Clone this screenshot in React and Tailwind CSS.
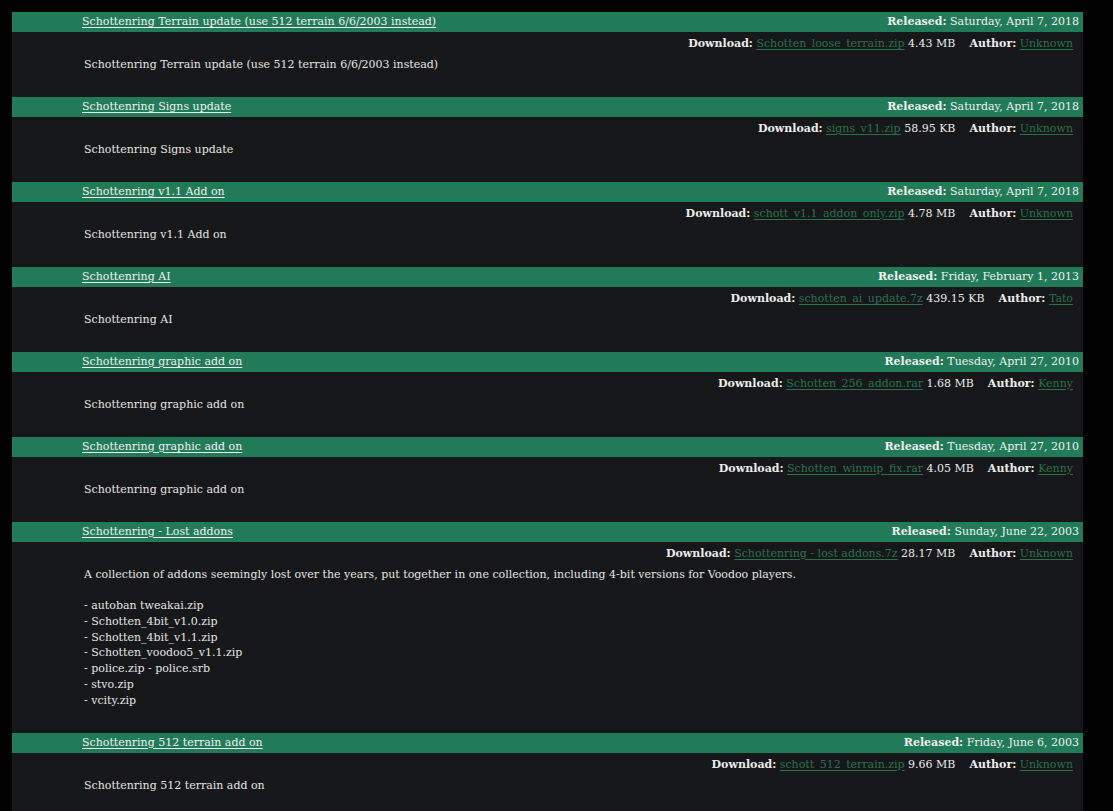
import React from "react";

const entries = [
  {
    title: "Schottenring Terrain update (use 512 terrain 6/6/2003 instead)",
    released: "Saturday, April 7, 2018",
    file: "Schotten_loose_terrain.zip",
    size: "4.43 MB",
    author: "Unknown",
    desc: ["Schottenring Terrain update (use 512 terrain 6/6/2003 instead)"],
  },
  {
    title: "Schottenring Signs update",
    released: "Saturday, April 7, 2018",
    file: "signs_v11.zip",
    size: "58.95 KB",
    author: "Unknown",
    desc: ["Schottenring Signs update"],
  },
  {
    title: "Schottenring v1.1 Add on",
    released: "Saturday, April 7, 2018",
    file: "schott_v1.1_addon_only.zip",
    size: "4.78 MB",
    author: "Unknown",
    desc: ["Schottenring v1.1 Add on"],
  },
  {
    title: "Schottenring AI",
    released: "Friday, February 1, 2013",
    file: "schotten_ai_update.7z",
    size: "439.15 KB",
    author: "Tato",
    desc: ["Schottenring AI"],
  },
  {
    title: "Schottenring graphic add on",
    released: "Tuesday, April 27, 2010",
    file: "Schotten_256_addon.rar",
    size: "1.68 MB",
    author: "Kenny",
    desc: ["Schottenring graphic add on"],
  },
  {
    title: "Schottenring graphic add on",
    released: "Tuesday, April 27, 2010",
    file: "Schotten_winmip_fix.rar",
    size: "4.05 MB",
    author: "Kenny",
    desc: ["Schottenring graphic add on"],
  },
  {
    title: "Schottenring - Lost addons",
    released: "Sunday, June 22, 2003",
    file: "Schottenring - lost addons.7z",
    size: "28.17 MB",
    author: "Unknown",
    desc: [
      "A collection of addons seemingly lost over the years, put together in one collection, including 4-bit versions for Voodoo players.",
      "\u00a0",
      "- autoban tweakai.zip",
      "- Schotten_4bit_v1.0.zip",
      "- Schotten_4bit_v1.1.zip",
      "- Schotten_voodoo5_v1.1.zip",
      "- police.zip - police.srb",
      "- stvo.zip",
      "- vcity.zip",
    ],
  },
  {
    title: "Schottenring 512 terrain add on",
    released: "Friday, June 6, 2003",
    file: "schott_512_terrain.zip",
    size: "9.66 MB",
    author: "Unknown",
    desc: ["Schottenring 512 terrain add on"],
  },
];

function Entry({ e }) {
  return (
    <div>
      <div className="flex h-[20px] items-center bg-[#217b58] pl-[70px] pr-[4px] text-[#f0f0f0]">
        <a href="#" className="underline decoration-1 underline-offset-2">
          {e.title}
        </a>
        <div className="ml-auto">
          <span className="font-bold">Released:</span> {e.released}
        </div>
      </div>
      <div className="pt-[4px] pb-[24.2px]">
        <div className="flex justify-end pr-[10px] leading-[16px] text-[#ececec]">
          <span className="font-bold">Download:</span>
          <span>&nbsp;</span>
          <a href="#" className="text-[#29704f] underline decoration-1 underline-offset-2">
            {e.file}
          </a>
          <span>&nbsp;{e.size}</span>
          <span className="ml-[14px] font-bold">Author:</span>
          <span>&nbsp;</span>
          <a href="#" className="text-[#29704f] underline decoration-1 underline-offset-2">
            {e.author}
          </a>
        </div>
        <div className="mt-[5px] pl-[72px] leading-[15.75px] text-[#e4e4e4]">
          {e.desc.map((d, i) => (
            <div key={i}>{d}</div>
          ))}
        </div>
      </div>
    </div>
  );
}

export default function App() {
  return (
    <div className="min-h-[811px] bg-black pl-[12px] pt-[12px]">
      <div
        className="w-[1071px] bg-[#161719] text-[11px] leading-[15.75px]"
        style={{ fontFamily: '"DejaVu Serif", serif' }}
      >
        {entries.map((e, i) => (
          <Entry key={i} e={e} />
        ))}
      </div>
    </div>
  );
}
